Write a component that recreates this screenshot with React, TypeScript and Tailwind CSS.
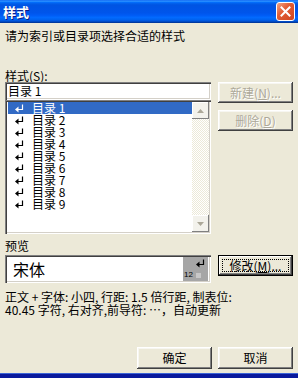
import React from "react";

function Arrow({ className = "" }: { className?: string }) {
  return (
    <svg width="9" height="9" viewBox="0 0 9 9" className={className}>
      <path d="M7.5 0.5 V5.5 H2" stroke="currentColor" strokeWidth="1.2" fill="none" />
      <path d="M0 5.5 L3.5 2.5 L3.5 8.5 Z" fill="currentColor" />
    </svg>
  );
}

function Btn({
  children,
  disabled,
  focused,
  className = "",
}: {
  children: React.ReactNode;
  disabled?: boolean;
  focused?: boolean;
  className?: string;
}) {
  return (
    <div
      className={
        "relative w-[75px] flex items-center justify-center bg-[#ece9d8] " +
        (focused
          ? "border border-black shadow-[inset_-1px_-1px_#404040,inset_1px_1px_#ffffff,inset_-2px_-2px_#808080] "
          : "shadow-[inset_-1px_-1px_#404040,inset_1px_1px_#ffffff,inset_-2px_-2px_#808080,inset_2px_2px_#f7f6f1] ") +
        (disabled ? "text-[#aca899] [text-shadow:1px_1px_0_#ffffff] " : "text-black ") +
        className
      }
    >
      <span className="whitespace-nowrap">{children}</span>
      {focused && <div className="absolute inset-[3px] border border-dotted border-black" />}
    </div>
  );
}

const items = ["1", "2", "3", "4", "5", "6", "7", "8", "9"];

export default function App() {
  return (
    <div className="w-[298px] h-[378px] bg-[#ece9d8] flex flex-col overflow-hidden font-['Noto_Sans_CJK_SC','Noto_Sans',sans-serif] text-[12px] leading-[12px] text-black">
      {/* Title bar */}
      <div className="h-[23px] flex items-center justify-between pl-[3px] pr-[3px] bg-[linear-gradient(180deg,#0058ee_0%,#3593ff_4%,#288eff_6%,#127dff_8%,#036ffc_10%,#0262ee_14%,#0057e5_20%,#0054e3_24%,#0055eb_56%,#005bf5_66%,#026afe_76%,#0062ef_86%,#0052d6_92%,#0040ab_96%,#003092_100%)]">
        <span className="text-white font-bold text-[13px] leading-[13px] [text-shadow:1px_1px_0_#0a1e8a]">样式</span>
        <div className="w-[19px] h-[19px] rounded-[3px] border border-white bg-[linear-gradient(135deg,#f1a587_0%,#e25e36_40%,#cf4520_100%)] flex items-center justify-center">
          <svg width="11" height="11" viewBox="0 0 11 11">
            <path d="M1.5 1.5 L9.5 9.5 M9.5 1.5 L1.5 9.5" stroke="#ffffff" strokeWidth="2" strokeLinecap="square" />
          </svg>
        </div>
      </div>

      {/* Body */}
      <div className="flex-1 px-[5px] flex flex-col">
        <div className="mt-[7px] whitespace-nowrap">请为索引或目录项选择合适的样式</div>
        <div className="mt-[28px] whitespace-nowrap">
          样式(<u>S</u>):
        </div>

        <div className="flex gap-[7px]">
          <div className="w-[206px] flex flex-col">
            {/* edit */}
            <div className="h-[18px] bg-white shadow-[inset_1px_1px_#808080,inset_2px_2px_#404040,inset_-1px_-1px_#ffffff,inset_-2px_-2px_#d4d0c8] pl-[3px] pt-[3px] whitespace-nowrap">
              目录 1
            </div>
            {/* list */}
            <div className="h-[134px] bg-white shadow-[inset_1px_1px_#808080,inset_2px_2px_#404040,inset_-1px_-1px_#ffffff,inset_-2px_-2px_#d4d0c8] p-[2px] flex">
              <div className="flex-1 flex flex-col pl-[1px]">
                {items.map((n, i) => (
                  <div
                    key={n}
                    className={
                      "h-[12px] flex items-center whitespace-nowrap " +
                      (i === 0 ? "bg-[#316ac5] text-white" : "text-black")
                    }
                  >
                    <Arrow className="ml-[7px] mr-[8px]" />
                    <span>目录 {n}</span>
                  </div>
                ))}
              </div>
              <div className="w-[17px] flex flex-col bg-[repeating-conic-gradient(#ffffff_0_25%,#ece9d8_0_50%)] bg-[length:2px_2px]">
                <div className="h-[17px] bg-[#f3f2ec] shadow-[inset_-1px_-1px_#808080,inset_1px_1px_#ffffff] flex items-center justify-center">
                  <svg width="7" height="4" viewBox="0 0 7 4">
                    <path d="M3.5 0 L7 4 L0 4 Z" fill="#aca899" />
                  </svg>
                </div>
                <div className="flex-1" />
                <div className="h-[17px] bg-[#f3f2ec] shadow-[inset_-1px_-1px_#808080,inset_1px_1px_#ffffff] flex items-center justify-center">
                  <svg width="7" height="4" viewBox="0 0 7 4">
                    <path d="M0 0 L7 0 L3.5 4 Z" fill="#aca899" />
                  </svg>
                </div>
              </div>
            </div>
          </div>
          <div className="flex flex-col gap-[7px]">
            <Btn disabled className="h-[21px]">
              新建(<u>N</u>)...
            </Btn>
            <Btn disabled className="h-[21px]">
              删除(<u>D</u>)
            </Btn>
          </div>
        </div>

        <div className="mt-[6px] whitespace-nowrap">预览</div>

        <div className="mt-[3px] flex gap-[7px] items-start">
          <div className="w-[206px] h-[28px] bg-white shadow-[inset_1px_1px_#808080,inset_2px_2px_#404040,inset_-1px_-1px_#ffffff,inset_-2px_-2px_#d4d0c8] p-[2px] flex">
            <div className="flex-1 flex items-center pl-[6px] text-[16px] leading-[16px]">宋体</div>
            <div className="w-[25px] mr-[1px] bg-[#a6a6a6] flex flex-col justify-between pb-[2px]">
              <div className="flex justify-end pr-[3px] pt-[2px]">
                <Arrow className="text-black" />
              </div>
              <div className="flex items-center gap-[3px] pl-[1px]">
                <span className="text-[8px] leading-[8px] text-black font-['Liberation_Sans',sans-serif]">12</span>
                <div className="w-[5px] h-[5px] bg-[#c8c8c8]" />
              </div>
            </div>
          </div>
          <Btn focused className="h-[21px]">
            修改(<u>M</u>)...
          </Btn>
        </div>

        <div className="mt-[7px] leading-[13px] whitespace-nowrap">
          <div>正文 + 字体: 小四, 行距: 1.5 倍行距, 制表位:</div>
          <div>40.45 字符, 右对齐,前导符: …，自动更新</div>
        </div>

        <div className="mt-auto mb-[4px] flex justify-end gap-[6px]">
          <Btn className="h-[22px]">确定</Btn>
          <Btn className="h-[22px]">取消</Btn>
        </div>
      </div>

      {/* bottom frame */}
      <div className="h-[1px] bg-[#3c64d6]" />
      <div className="h-[4px] bg-[#0a1a9c]" />
    </div>
  );
}
